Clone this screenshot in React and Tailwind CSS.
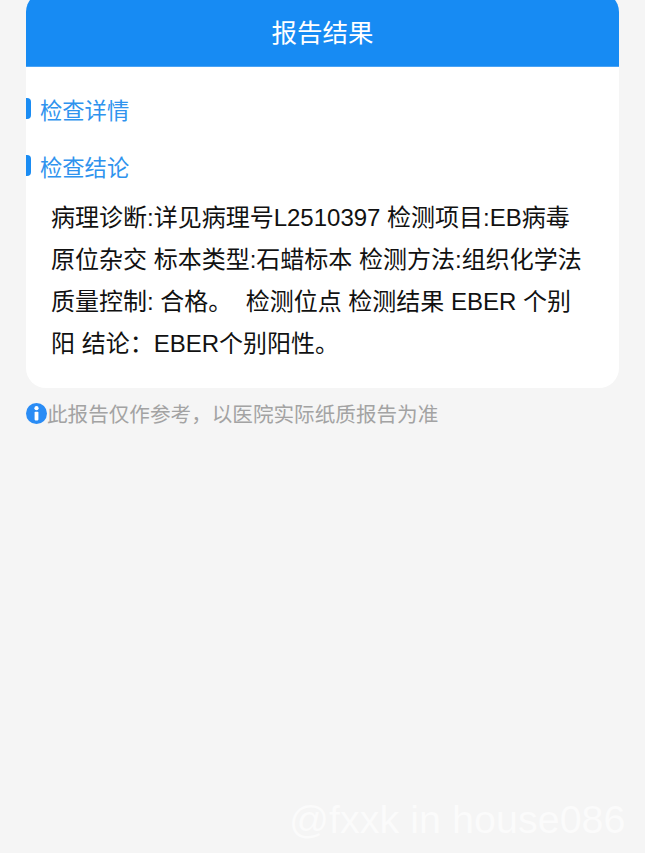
function SectionTitle({ children, className }) {
  return (
    <div className={"flex items-center " + className}>
      <span className="w-[5px] h-[21px] mb-[7px] bg-[#1a8cf3] rounded-r-[4px]" />
      <span className="ml-[9px] text-[22.3px] leading-[32px] text-[#2f93ee]">{children}</span>
    </div>
  );
}

export default function App() {
  return (
    <div
      className="relative w-[645px] h-[853px] overflow-hidden bg-[#f5f5f5]"
      style={{ fontFamily: '"Liberation Sans", "Noto Sans CJK SC", sans-serif' }}
    >
      <div className="mx-[26px] -mt-[8px] pt-0 bg-white rounded-[20px] overflow-hidden h-[396px]">
        <div className="h-[75px] pt-[8px] bg-[#178bf3] border-b border-[#4aa3f5] flex items-center justify-center text-white text-[25.5px]">
          报告结果
        </div>
        <SectionTitle className="mt-[29px]">检查详情</SectionTitle>
        <SectionTitle className="mt-[25px]">检查结论</SectionTitle>
        <div className="mt-[12px] pl-[25px] pr-[30px] text-[24px] leading-[42px] text-[#111111]">
          病理诊断:详见病理号L2510397 检测项目:EB病毒原位杂交 标本类型:石蜡标本 检测方法:组织化学法 质量控制: 合格。&nbsp; 检测位点 检测结果 EBER 个别阳 结论：EBER个别阳性。
        </div>
      </div>
      <div className="ml-[26px] mt-[14px] flex items-center text-[20.6px] leading-[26px] text-[#a3a3a3]">
        <svg width="21" height="21" viewBox="0 0 21 21" className="shrink-0 -mt-[4px]">
          <circle cx="10.5" cy="10.5" r="10.5" fill="#2a8cf5" />
          <circle cx="10.5" cy="5.2" r="2.1" fill="#fff" />
          <rect x="8.6" y="8.8" width="3.8" height="8.6" rx="0.8" fill="#fff" />
        </svg>
        <span>此报告仅作参考，以医院实际纸质报告为准</span>
      </div>
      <div className="absolute left-[289px] top-[797px] text-[39.5px] leading-[44px] text-white opacity-60 whitespace-nowrap">
        @fxxk in house086
      </div>
    </div>
  );
}
